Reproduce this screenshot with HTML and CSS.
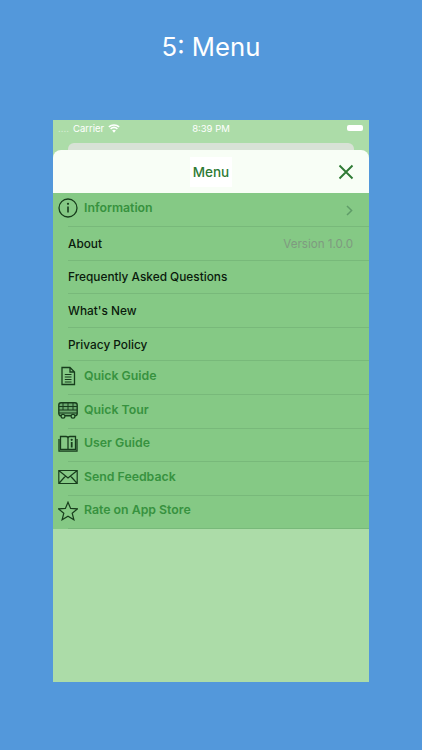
FILE: index.html
```html
<!DOCTYPE html>
<html lang="en">
<head>
<meta charset="utf-8">
<title>5: Menu</title>
<link rel="stylesheet" href="styles.css">
</head>
<body>
<h1 class="caption">5: Menu</h1>
<div class="phone">
  <div class="status">
    <div class="status-left"><span class="dots">....</span><span>Carrier</span>
      <svg class="wifi" viewBox="0 0 14 10" width="12" height="9"><path d="M7 10 L4.8 7.4 A3.4 3.4 0 0 1 9.2 7.4 Z M3.6 6.2 L2.4 4.8 A7 7 0 0 1 11.6 4.8 L10.4 6.2 A5.2 5.2 0 0 0 3.6 6.2 Z M1.6 3.8 L0.4 2.4 A10.2 10.2 0 0 1 13.6 2.4 L12.4 3.8 A8.4 8.4 0 0 0 1.6 3.8 Z" fill="#fff"/></svg>
    </div>
    <span class="time">8:39 PM</span>
    <div class="battery"></div>
  </div>
  <div class="back-sheet"></div>
  <div class="sheet">
    <header class="sheet-head">
      <span class="sheet-title">Menu</span>
      <svg class="close" viewBox="0 0 16 16" width="16" height="16"><path d="M1.5 1.5 L14.5 14.5 M14.5 1.5 L1.5 14.5" stroke="#2f7a34" stroke-width="1.9" fill="none"/></svg>
    </header>
    <div class="menu">
      <div class="row head-row first">
        <svg class="icon" viewBox="0 0 20 20" width="20" height="20"><circle cx="10" cy="10" r="9" fill="none" stroke="#173d1c" stroke-width="1.3"/><circle cx="10" cy="5.8" r="1.1" fill="#173d1c"/><path d="M10 8.4 V14.6" stroke="#173d1c" stroke-width="1.6"/></svg>
        <span class="label">Information</span>
        <svg class="chev" viewBox="0 0 7 11" width="7" height="11"><path d="M1 1 L5.6 5.5 L1 10" stroke="#5f9c68" stroke-width="1.5" fill="none"/></svg>
      </div>
      <div class="row sub"><span>About</span><span class="version">Version 1.0.0</span></div>
      <div class="row sub"><span>Frequently Asked Questions</span></div>
      <div class="row sub"><span>What's New</span></div>
      <div class="row sub"><span>Privacy Policy</span></div>
      <div class="row head-row">
        <svg class="icon" viewBox="0 0 20 20" width="20" height="20"><path d="M4 1.5 H12 L16.5 6 V18.5 H4 Z M12 1.5 V6 H16.5" fill="none" stroke="#173d1c" stroke-width="1.3"/><path d="M6.8 8.5 H13.5 M6.8 11 H13.5 M6.8 13.5 H13.5 M6.8 16 H13.5" stroke="#173d1c" stroke-width="1.1"/></svg>
        <span class="label">Quick Guide</span>
      </div>
      <div class="row head-row">
        <svg class="icon" viewBox="0 0 20 20" width="20" height="20"><rect x="0.8" y="2.8" width="18.4" height="13" rx="2.2" fill="#6aa86e" stroke="#173d1c" stroke-width="1.4"/><path d="M1 6.5 H19 M1 10 H19 M1 13 H19 M5 3 V10 M10 3 V10 M15 3 V10" stroke="#173d1c" stroke-width="1"/><circle cx="5" cy="16.2" r="1.9" fill="#85c985" stroke="#173d1c" stroke-width="1.2"/><circle cx="15" cy="16.2" r="1.9" fill="#85c985" stroke="#173d1c" stroke-width="1.2"/></svg>
        <span class="label">Quick Tour</span>
      </div>
      <div class="row head-row">
        <svg class="icon" viewBox="0 0 20 20" width="20" height="20"><path d="M2.5 2.5 H8 Q10 2.5 10 4.5 V15.5 H2.5 Z M17.5 2.5 H12 Q10 2.5 10 4.5 V15.5 H17.5 Z" fill="none" stroke="#173d1c" stroke-width="1.3"/><path d="M1 5 V17.2 H19 V5" fill="none" stroke="#173d1c" stroke-width="1.3"/><circle cx="13.7" cy="5.8" r="1.1" fill="#173d1c"/><path d="M13.7 8 V13.5" stroke="#173d1c" stroke-width="1.8"/></svg>
        <span class="label">User Guide</span>
      </div>
      <div class="row head-row">
        <svg class="icon" viewBox="0 0 20 20" width="20" height="20"><path d="M0.8 3.5 H19.2 V16.5 H0.8 Z M0.8 3.5 L10 11 L19.2 3.5 M0.8 16.5 L7.5 9 M19.2 16.5 L12.5 9" fill="none" stroke="#173d1c" stroke-width="1.2"/></svg>
        <span class="label">Send Feedback</span>
      </div>
      <div class="row head-row">
        <svg class="icon" viewBox="0 0 20 20" width="20" height="20"><path d="M10 1.2 L12.6 7.4 L19.4 7.9 L14.2 12.2 L15.9 18.8 L10 15.3 L4.1 18.8 L5.8 12.2 L0.6 7.9 L7.4 7.4 Z" fill="none" stroke="#173d1c" stroke-width="1.2"/></svg>
        <span class="label">Rate on App Store</span>
      </div>
    </div>
  </div>
</div>
</body>
</html>
```
FILE: styles.css
```css
* { box-sizing: border-box; }
html, body { margin: 0; height: 100%; }
body {
  width: 422px;
  height: 750px;
  overflow: hidden;
  background: #5398db;
  font-family: Inter, "Liberation Sans", Arial, sans-serif;
  display: flex;
  flex-direction: column;
  align-items: center;
}
.caption {
  margin: 30px 0 0;
  height: 90px;
  font-weight: 400;
  font-size: 25.7px;
  line-height: 34px;
  color: #fff;
  text-align: center;
}
.phone {
  width: 316px;
  height: 562px;
  background: #acdca8;
  display: flex;
  flex-direction: column;
}
.status {
  height: 14px;
  margin-top: 1px;
  padding: 0 6px 0 5px;
  display: flex;
  align-items: center;
  justify-content: space-between;
  color: #fff;
  font-size: 9.5px;
  position: relative;
}
.status-left { display: flex; align-items: center; gap: 4px; }
.dots { color: #d4ecd2; }
.wifi { display: block; }
.time {
  position: absolute;
  left: 0; right: 0;
  text-align: center;
}
.battery { width: 16px; height: 6px; border-radius: 2px; background: #fff; }
.back-sheet {
  height: 20px;
  margin: 8px 15px -13px;
  background: #d8e2d6;
  border-radius: 6px 6px 0 0;
}
.sheet { position: relative; flex: 1; display: flex; flex-direction: column; }
.sheet-head {
  height: 43px;
  background: #f8fef6;
  border-radius: 8px 8px 0 0;
  display: flex;
  align-items: center;
  justify-content: center;
  position: relative;
}
.sheet-title {
  font-size: 13.5px;
  font-weight: 500;
  color: #2f7a34;
  background: #fff;
  padding: 7px 3px;
}
.close { position: absolute; right: 15.5px; top: 14px; }
.menu { background: #85c985; display: flex; flex-direction: column; }
.row {
  height: 33.6px;
  display: flex;
  align-items: center;
  position: relative;
  border-top: 1px solid #78b97a;
  margin-left: 15px;
}
.first { border-top: 0; height: 33px; }
.head-row .icon { position: absolute; left: -10px; top: 5px; }
.label {
  margin-left: 16px;
  font-weight: 600;
  font-size: 12.3px;
  color: #37923f;
  margin-top: -4.5px;
}
.sub {
  font-size: 11.85px;
  font-weight: 500;
  color: #0a1a0c;
  justify-content: space-between;
  padding-right: 16px;
  padding-top: 1px;
}
.version { color: #7f9a80; font-weight: 400; font-size: 11.6px; }
.chev { position: absolute; right: 16px; top: 12px; }
.menu > .row:last-child { border-bottom: 1px solid #78b97a; height: 34.6px; }
```
